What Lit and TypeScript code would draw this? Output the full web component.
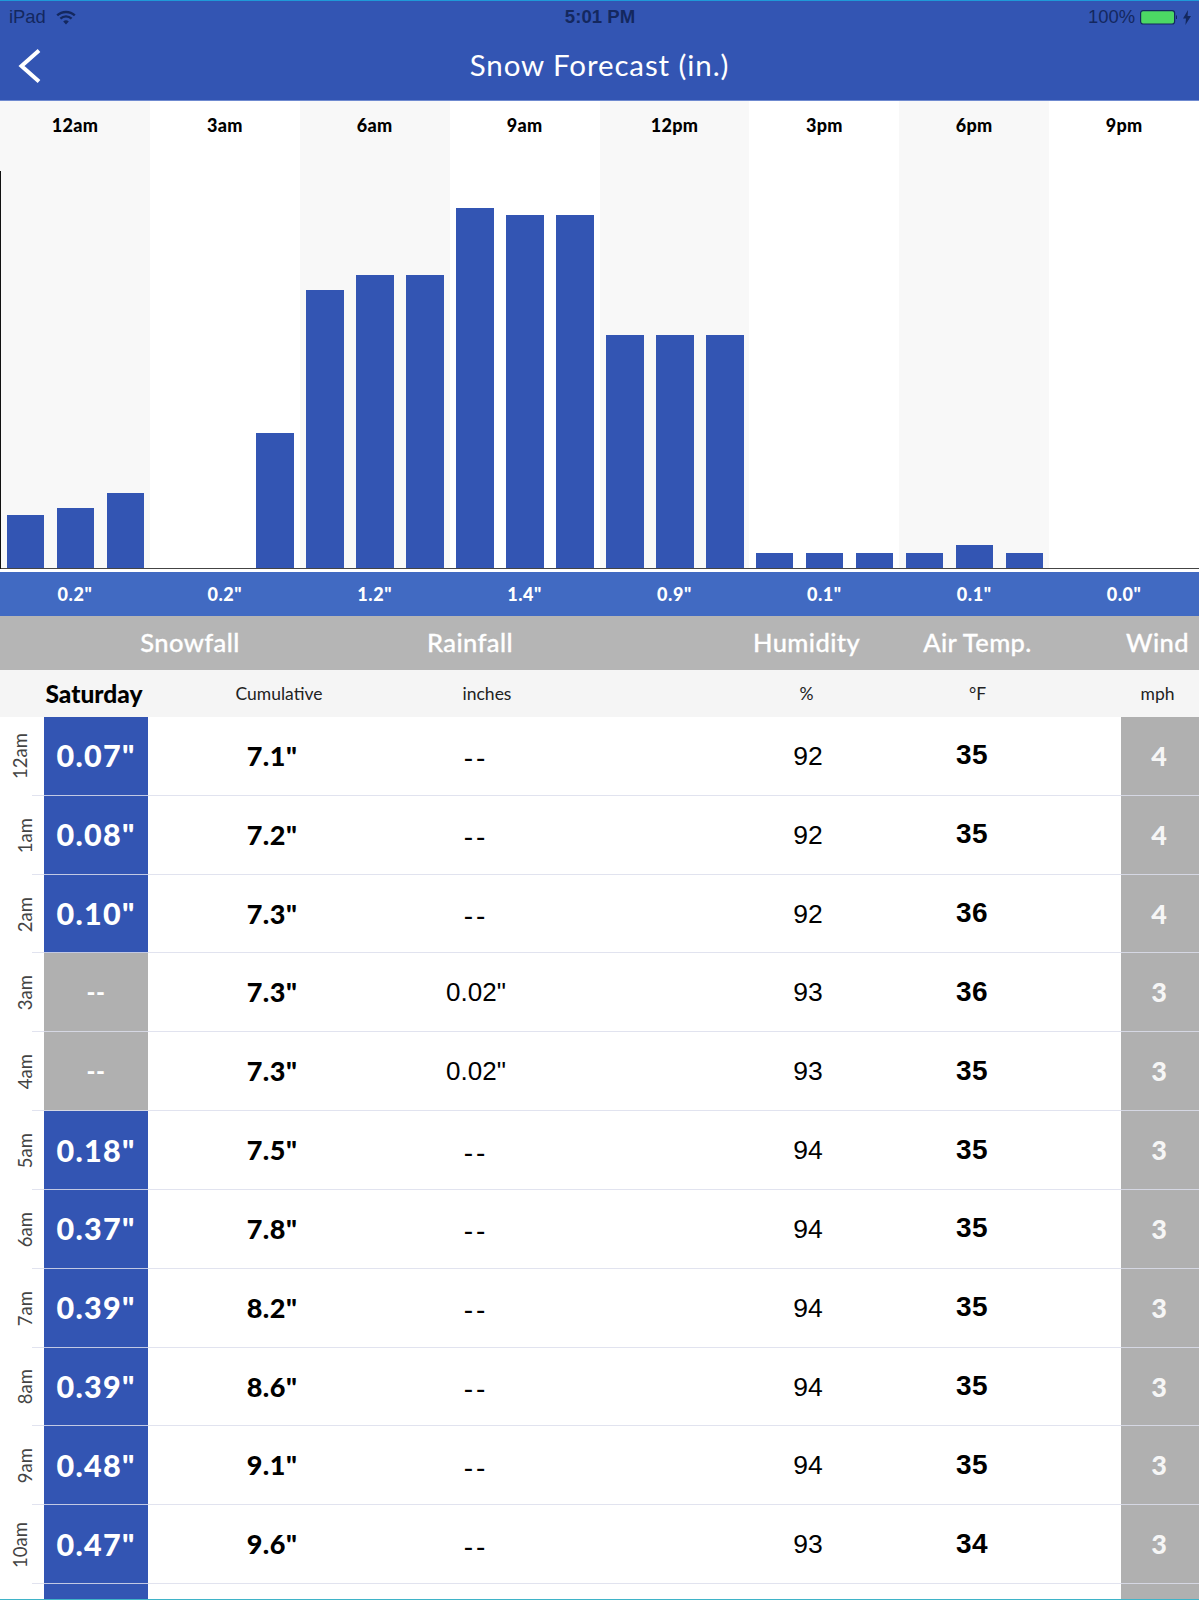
import { LitElement, html, css } from 'lit';
import { customElement } from 'lit/decorators.js';

const BANDS = [
  { label: '12am', total: '0.2"', bars: [0.07, 0.08, 0.1] },
  { label: '3am', total: '0.2"', bars: [0, 0, 0.18] },
  { label: '6am', total: '1.2"', bars: [0.37, 0.39, 0.39] },
  { label: '9am', total: '1.4"', bars: [0.48, 0.47, 0.47] },
  { label: '12pm', total: '0.9"', bars: [0.31, 0.31, 0.31] },
  { label: '3pm', total: '0.1"', bars: [0.02, 0.02, 0.02] },
  { label: '6pm', total: '0.1"', bars: [0.02, 0.03, 0.02] },
  { label: '9pm', total: '0.0"', bars: [0, 0, 0] },
];

const ROWS = [
  ['12am', '0.07"', '7.1"', '--', '92', '35', '4'],
  ['1am', '0.08"', '7.2"', '--', '92', '35', '4'],
  ['2am', '0.10"', '7.3"', '--', '92', '36', '4'],
  ['3am', '--', '7.3"', '0.02"', '93', '36', '3'],
  ['4am', '--', '7.3"', '0.02"', '93', '35', '3'],
  ['5am', '0.18"', '7.5"', '--', '94', '35', '3'],
  ['6am', '0.37"', '7.8"', '--', '94', '35', '3'],
  ['7am', '0.39"', '8.2"', '--', '94', '35', '3'],
  ['8am', '0.39"', '8.6"', '--', '94', '35', '3'],
  ['9am', '0.48"', '9.1"', '--', '94', '35', '3'],
  ['10am', '0.47"', '9.6"', '--', '93', '34', '3'],
  ['', '', '', '', '', '', ''],
];

const PX_PER_INCH = 751;

@customElement('app-root')
export class AppRoot extends LitElement {
  static styles = css`
    :host {
      display: block;
      height: 1600px;
      overflow: hidden;
      position: relative;
      background: #fff;
      font-family: Lato, 'Liberation Sans', sans-serif;
      color: #000;
    }

    /* status bar + nav */
    .top {
      height: 99px;
      background: #3355b3;
      border-top: 1px solid #1f9ad8;
      border-bottom: 1px solid #6f8ad0;
    }
    .status {
      height: 30px;
      box-sizing: border-box;
      padding: 2px 8px 0 9px;
      display: grid;
      grid-template-columns: 1fr auto 1fr;
      align-items: center;
      color: #14285f;
      font-family: 'Liberation Sans', sans-serif;
      font-size: 18.4px;
    }
    .status-left,
    .status-right {
      display: flex;
      align-items: center;
    }
    .status-left {
      gap: 10px;
    }
    .status-right {
      justify-content: flex-end;
      gap: 5px;
    }
    .time {
      font-weight: 700;
      font-size: 18.6px;
    }
    .battery {
      display: block;
    }
    .nav {
      height: 69px;
      display: grid;
      grid-template-columns: 1fr auto 1fr;
      align-items: center;
      padding-left: 18px;
    }
    .back {
      display: block;
    }
    .title {
      color: #fff;
      font-size: 29.5px;
      font-weight: 400;
      letter-spacing: 0.9px;
      margin-left: -18px;
      padding-bottom: 2px;
    }

    /* chart */
    .chart {
      display: grid;
      grid-template-columns: repeat(8, 1fr);
      height: 468px;
      position: relative;
    }
    .chart::before {
      content: '';
      position: absolute;
      left: 0;
      top: 70px;
      bottom: 0;
      width: 1px;
      background: #111;
    }
    .band {
      display: flex;
      flex-direction: column;
      border-bottom: 1px solid #444;
      box-sizing: border-box;
    }
    .band:nth-child(odd) {
      background: #f8f8f8;
    }
    .band-label {
      text-align: center;
      font-size: 18px;
      font-weight: 900;
      line-height: 20px;
      letter-spacing: 0.3px;
      margin-top: 14px;
    }
    .bars {
      flex: 1;
      display: flex;
      align-items: flex-end;
      gap: 12.5px;
      padding-left: 6.5px;
    }
    .bar {
      width: 37.5px;
      background: #3355b3;
    }
    .totals {
      margin-top: 3px;
      height: 44px;
      display: grid;
      grid-template-columns: repeat(8, 1fr);
      align-items: center;
      background: #416ac2;
      color: #fff;
      font-size: 18px;
      font-weight: 900;
      letter-spacing: 0.6px;
      text-align: center;
    }

    /* table heads */
    .heads {
      height: 54px;
      box-sizing: border-box;
      padding-bottom: 2px;
      display: grid;
      grid-template-columns: 380px 180px 130px 233px 109px 84px 83px;
      align-items: center;
      background: #b5b5b5;
      color: #fff;
      font-size: 25.5px;
      font-weight: 500;
      -webkit-text-stroke: 0.3px #fff;
      text-align: center;
      letter-spacing: 0.4px;
    }
    .units {
      height: 47px;
      display: grid;
      grid-template-columns: 188px 182px 234px 86px 233px 109px 84px 83px;
      align-items: center;
      background: #f5f5f5;
      color: #222;
      font-size: 17.5px;
      text-align: center;
    }
    .day {
      color: #000;
      font-size: 24.5px;
      font-weight: 900;
    }

    /* rows */
    .row {
      height: 78.84px;
      display: grid;
      grid-template-columns: 44px 104px 248px 160px 184px 136px 192px 53px 78px;
      align-items: stretch;
      position: relative;
      text-align: center;
    }
    .row::after {
      content: '';
      position: absolute;
      left: 32px;
      right: 0;
      bottom: 0;
      height: 1px;
      background: rgba(220, 222, 236, 0.85);
    }
    .cell {
      display: flex;
      align-items: center;
      justify-content: center;
    }
    .hour {
      padding-left: 6px;
      box-sizing: border-box;
    }
    .hour.wide {
      padding: 0 4px 0 0;
    }
    .hour span {
      writing-mode: vertical-rl;
      transform: rotate(180deg);
      font-size: 18.5px;
      color: #444;
    }
    .snow {
      background: #3355b3;
      color: #fff;
      font-size: 30.5px;
      font-weight: 900;
      letter-spacing: 1.3px;
      padding-bottom: 2px;
      box-sizing: border-box;
    }
    .snow.none {
      background: #b0b0b0;
      font-size: 24px;
      letter-spacing: 0.5px;
    }
    .cum {
      font-size: 27px;
      font-weight: 900;
      letter-spacing: 0.5px;
      padding-bottom: 2px;
      box-sizing: border-box;
    }
    .rain {
      font-family: 'Liberation Sans', sans-serif;
      font-size: 26px;
    }
    .rain.empty {
      font-size: 28px;
      letter-spacing: 3px;
      padding-top: 4px;
      box-sizing: border-box;
    }
    .hum {
      font-family: 'Liberation Sans', sans-serif;
      font-size: 26.5px;
    }
    .temp {
      font-family: 'Liberation Sans', sans-serif;
      font-size: 28px;
      font-weight: 700;
      letter-spacing: 0.5px;
      padding-bottom: 2px;
      box-sizing: border-box;
    }
    .wind {
      background: #b0b0b0;
      color: #f6f6f6;
      font-size: 27px;
      font-weight: 900;
      padding: 0 2px 2px 0;
      box-sizing: border-box;
    }
    .edge {
      position: absolute;
      left: 0;
      right: 0;
      bottom: 0;
      height: 1px;
      background: #3fb4c8;
    }
  `;

  private renderStatus() {
    return html`
      <div class="status">
        <div class="status-left">
          <span>iPad</span>
          <svg width="20" height="15" viewBox="0 0 20 15" fill="none" stroke="#14285f">
            <path d="M1.2 5.4C6 .8 14 .8 18.8 5.4" stroke-width="2.4" />
            <path d="M4.4 8.6C7.6 5.6 12.4 5.6 15.6 8.6" stroke-width="2.4" />
            <path d="M7.2 11.4L10 14.4l2.8-3C11 10 9 10 7.2 11.4z" fill="#14285f" stroke="none" />
          </svg>
        </div>
        <span class="time">5:01 PM</span>
        <div class="status-right">
          <span>100%</span>
          <svg class="battery" width="38" height="15" viewBox="0 0 38 15">
            <rect x="0.6" y="0.6" width="34" height="13.4" rx="2.5" fill="#4cd964" stroke="#14285f" stroke-width="1.2" />
            <path d="M36 5.5h1v3.5h-1z" fill="#14285f" />
          </svg>
          <svg width="8" height="15" viewBox="0 0 8 15">
            <path d="M5 0L0 8.4h3L2.4 15 8 6H4.6z" fill="#14285f" />
          </svg>
        </div>
      </div>
    `;
  }

  private renderChart() {
    return html`
      <div class="chart">
        ${BANDS.map(
          (b) => html`
            <div class="band">
              <div class="band-label">${b.label}</div>
              <div class="bars">
                ${b.bars.map((v) => html`<div class="bar" style="height:${v * PX_PER_INCH}px"></div>`)}
              </div>
            </div>
          `
        )}
      </div>
      <div class="totals">${BANDS.map((b) => html`<span>${b.total}</span>`)}</div>
    `;
  }

  private renderRow(r: string[]) {
    const none = r[1] === '--';
    const dry = r[3] === '--';
    return html`
      <div class="row">
        <div class="cell hour ${r[0].length > 3 ? 'wide' : ''}"><span>${r[0]}</span></div>
        <div class="cell snow ${none ? 'none' : ''}">${r[1]}</div>
        <div class="cell cum">${r[2]}</div>
        <div class="cell rain ${dry ? 'empty' : ''}">${r[3]}</div>
        <div></div>
        <div class="cell hum">${r[4]}</div>
        <div class="cell temp">${r[5]}</div>
        <div></div>
        <div class="cell wind">${r[6]}</div>
      </div>
    `;
  }

  render() {
    return html`
      <div class="top">
        ${this.renderStatus()}
        <div class="nav">
          <svg class="back" width="24" height="34" viewBox="0 0 24 34" fill="none" stroke="#fff" stroke-width="4">
            <path d="M21 1.5L3.5 17 21 32.5" />
          </svg>
          <div class="title">Snow Forecast (in.)</div>
        </div>
      </div>
      ${this.renderChart()}
      <div class="heads">
        <span>Snowfall</span><span>Rainfall</span><span></span><span>Humidity</span><span>Air Temp.</span><span></span><span>Wind</span>
      </div>
      <div class="units">
        <span class="day">Saturday</span><span>Cumulative</span><span>inches</span><span></span><span>%</span><span>°F</span><span></span><span>mph</span>
      </div>
      ${ROWS.map((r) => this.renderRow(r))}
      <div class="edge"></div>
    `;
  }
}
